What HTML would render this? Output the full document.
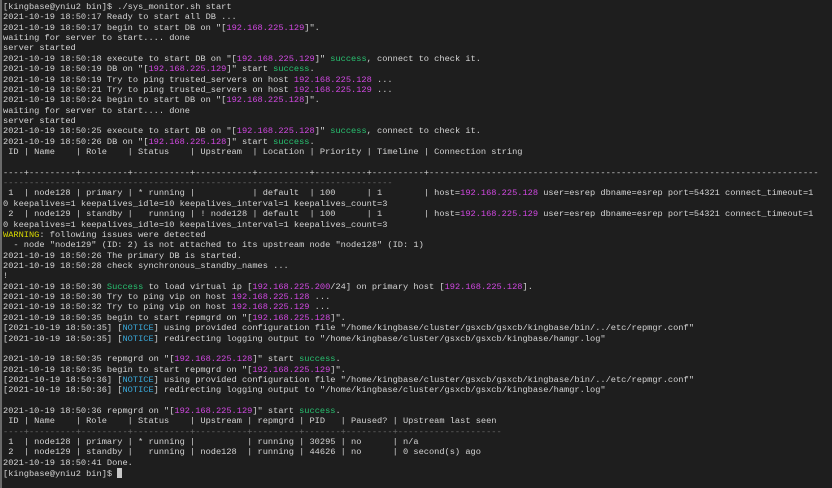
<!DOCTYPE html>
<html><head><meta charset="utf-8"><style>
html,body{margin:0;padding:0;background:#1e1e1e;width:832px;height:488px;overflow:hidden}
.edge{position:absolute;left:0;top:0;width:2px;height:488px;background:#6a6a6a}
pre{position:absolute;left:3px;top:2px;margin:0;font-family:"Liberation Mono",monospace;font-size:8.67px;line-height:10.36px;color:#d4d4d4;white-space:pre}
.m{color:#d048e0}.g{color:#28c070}.c{color:#3aa8d8}.y{color:#d8d800}.d{color:#6a6a6a}
.cur{display:inline-block;width:5px;height:10px;background:#c8c8c8;vertical-align:-2px}
</style></head><body><div class="edge"></div><pre>[kingbase@yniu2 bin]$ ./sys_monitor.sh start
2021-10-19 18:50:17 Ready to start all DB ...
2021-10-19 18:50:17 begin to start DB on "[<span class="m">192.168.225.129</span>]".
waiting for server to start.... done
server started
2021-10-19 18:50:18 execute to start DB on "[<span class="m">192.168.225.129</span>]" <span class="g">success</span>, connect to check it.
2021-10-19 18:50:19 DB on "[<span class="m">192.168.225.129</span>]" start <span class="g">success</span>.
2021-10-19 18:50:19 Try to ping trusted_servers on host <span class="m">192.168.225.128</span> ...
2021-10-19 18:50:21 Try to ping trusted_servers on host <span class="m">192.168.225.129</span> ...
2021-10-19 18:50:24 begin to start DB on "[<span class="m">192.168.225.128</span>]".
waiting for server to start.... done
server started
2021-10-19 18:50:25 execute to start DB on "[<span class="m">192.168.225.128</span>]" <span class="g">success</span>, connect to check it.
2021-10-19 18:50:26 DB on "[<span class="m">192.168.225.128</span>]" start <span class="g">success</span>.
 ID | Name    | Role    | Status    | Upstream  | Location | Priority | Timeline | Connection string

----+---------+---------+-----------+-----------+----------+----------+----------+---------------------------------------------------------------------------
<span class="d">---------------------------------------------------------------------------</span>
 1  | node128 | primary | * running |           | default  | 100      | 1        | host=<span class="m">192.168.225.128</span> user=esrep dbname=esrep port=54321 connect_timeout=1
0 keepalives=1 keepalives_idle=10 keepalives_interval=1 keepalives_count=3
 2  | node129 | standby |   running | ! node128 | default  | 100      | 1        | host=<span class="m">192.168.225.129</span> user=esrep dbname=esrep port=54321 connect_timeout=1
0 keepalives=1 keepalives_idle=10 keepalives_interval=1 keepalives_count=3
<span class="y">WARNING</span>: following issues were detected
  - node "node129" (ID: 2) is not attached to its upstream node "node128" (ID: 1)
2021-10-19 18:50:26 The primary DB is started.
2021-10-19 18:50:28 check synchronous_standby_names ...
!
2021-10-19 18:50:30 <span class="g">Success</span> to load virtual ip [<span class="m">192.168.225.200</span>/24] on primary host [<span class="m">192.168.225.128</span>].
2021-10-19 18:50:30 Try to ping vip on host <span class="m">192.168.225.128</span> ...
2021-10-19 18:50:32 Try to ping vip on host <span class="m">192.168.225.129</span> ...
2021-10-19 18:50:35 begin to start repmgrd on "[<span class="m">192.168.225.128</span>]".
[2021-10-19 18:50:35] [<span class="c">NOTICE</span>] using provided configuration file "/home/kingbase/cluster/gsxcb/gsxcb/kingbase/bin/../etc/repmgr.conf"
[2021-10-19 18:50:35] [<span class="c">NOTICE</span>] redirecting logging output to "/home/kingbase/cluster/gsxcb/gsxcb/kingbase/hamgr.log"

2021-10-19 18:50:35 repmgrd on "[<span class="m">192.168.225.128</span>]" start <span class="g">success</span>.
2021-10-19 18:50:35 begin to start repmgrd on "[<span class="m">192.168.225.129</span>]".
[2021-10-19 18:50:36] [<span class="c">NOTICE</span>] using provided configuration file "/home/kingbase/cluster/gsxcb/gsxcb/kingbase/bin/../etc/repmgr.conf"
[2021-10-19 18:50:36] [<span class="c">NOTICE</span>] redirecting logging output to "/home/kingbase/cluster/gsxcb/gsxcb/kingbase/hamgr.log"

2021-10-19 18:50:36 repmgrd on "[<span class="m">192.168.225.129</span>]" start <span class="g">success</span>.
 ID | Name    | Role    | Status    | Upstream | repmgrd | PID   | Paused? | Upstream last seen
<span class="d">----+---------+---------+-----------+----------+---------+-------+---------+--------------------</span>
 1  | node128 | primary | * running |          | running | 30295 | no      | n/a
 2  | node129 | standby |   running | node128  | running | 44626 | no      | 0 second(s) ago
2021-10-19 18:50:41 Done.
[kingbase@yniu2 bin]$ <span class="cur"></span></pre></body></html>
